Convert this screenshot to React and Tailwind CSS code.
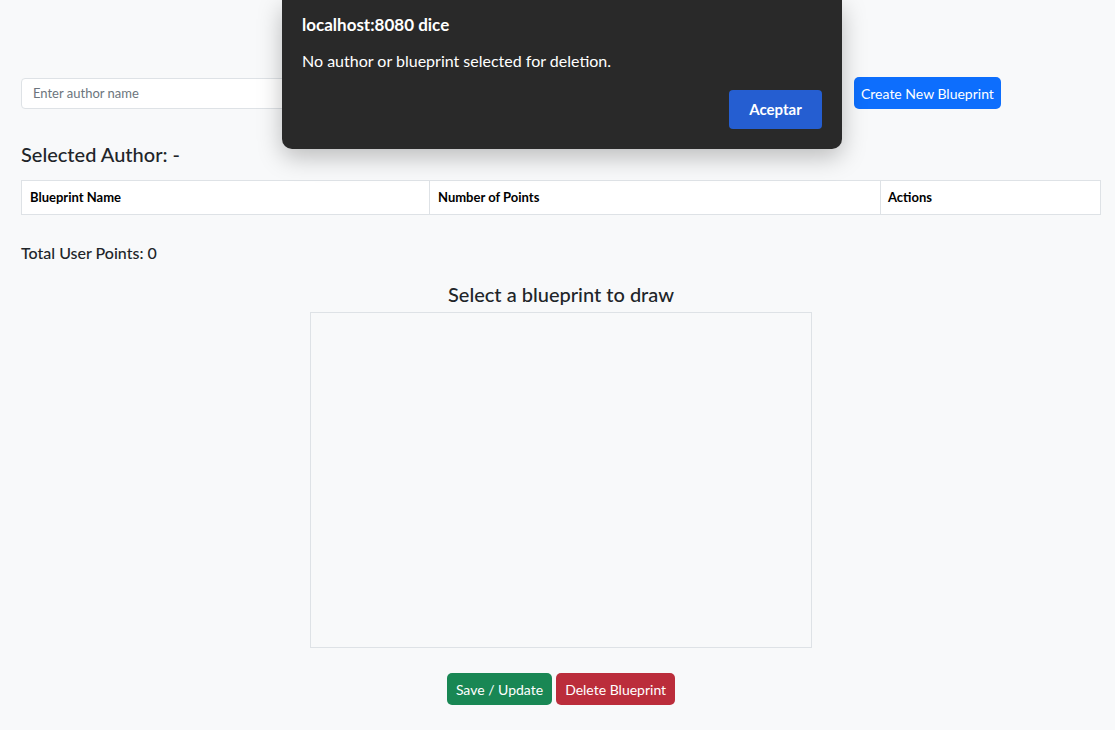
export default function App() {
  const font = { fontFamily: 'Lato, "Noto Sans", sans-serif' };

  return (
    <div className="relative min-h-[730px] bg-[#f8f9fa] text-[#212529] font-['Lato','Noto_Sans',sans-serif]">
      <div className="pl-[21px] pr-[14px] pt-[77px]">
        {/* search row */}
        <div className="flex items-center">
          <div className="flex w-[800px] gap-2">
            <input
              type="text"
              placeholder="Enter author name"
              className="h-[31px] flex-1 rounded border border-[#dee2e6] bg-white px-[11px] text-[13px] placeholder:text-[#6c757d] outline-none"
            />
            <button className="h-[31px] rounded bg-[#0d6efd] px-2 text-[14px] text-white">Get Blueprints</button>
          </div>
          <button className="ml-[33px] h-[32px] rounded-[5px] bg-[#0d6efd] px-[7px] text-[14px] text-white">
            Create New Blueprint
          </button>
        </div>

        <h4 className="mt-[33px] text-[20px] font-medium leading-[24px]">Selected Author: -</h4>

        <table className="mt-[14px] w-[1080px] border-collapse bg-white text-[13px]">
          <thead>
            <tr className="h-[34px]">
              <th className="w-[408px] border border-[#dee2e6] px-2 text-left font-bold text-black">Blueprint Name</th>
              <th className="w-[451px] border border-[#dee2e6] px-2 text-left font-bold text-black">Number of Points</th>
              <th className="border border-[#dee2e6] px-[7px] text-left font-bold text-black">Actions</th>
            </tr>
          </thead>
        </table>

        <h5 className="mt-[28px] text-[16px] font-medium leading-[19px]">Total User Points: 0</h5>

        <div className="flex flex-col items-center">
          <h4 className="mt-[20px] text-[20px] font-medium leading-[24px]">Select a blueprint to draw</h4>
          <div className="mt-[6px] h-[336px] w-[502px] border border-[#dee2e6] bg-[#f8f9fa]" />
          <div className="mt-[25px] flex gap-1">
            <button className="h-[32px] rounded-[5px] bg-[#198754] px-[9px] text-[14px] text-white">Save / Update</button>
            <button className="h-[32px] rounded-[5px] bg-[#bb2d3b] px-[9px] text-[14px] text-white">Delete Blueprint</button>
          </div>
        </div>
      </div>

      {/* browser alert overlay */}
      <div
        className="absolute left-[282px] top-0 flex h-[149px] w-[560px] flex-col rounded-b-[10px] bg-[#292929] px-5 text-white shadow-[0_8px_24px_rgba(0,0,0,0.25)]"
        style={font}
      >
        <div className="mt-[14px] text-[17px] font-bold leading-[22px]">localhost:8080 dice</div>
        <div className="mt-[15px] text-[16px] leading-[20px]">No author or blueprint selected for deletion.</div>
        <div className="mt-[19px] flex justify-end">
          <button className="h-[39px] w-[93px] rounded-[4px] bg-[#255ed1] text-[15px] font-bold text-white">Aceptar</button>
        </div>
      </div>
    </div>
  );
}
